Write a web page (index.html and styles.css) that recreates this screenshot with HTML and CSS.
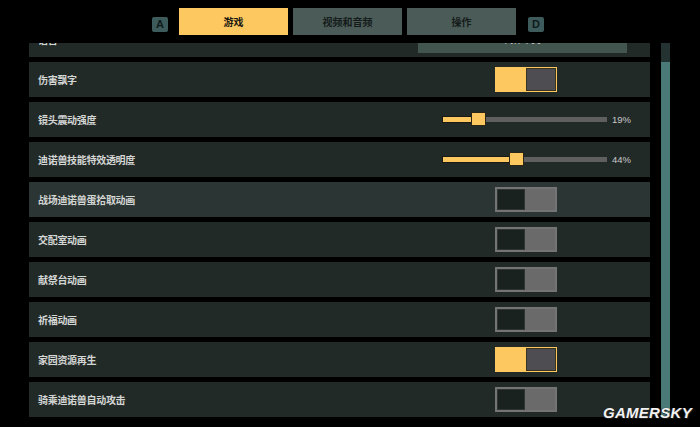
FILE: index.html
```html
<!DOCTYPE html>
<html lang="zh">
<head>
<meta charset="utf-8">
<title>设置 - 游戏</title>
<link rel="stylesheet" href="styles.css">
</head>
<body>
<header class="tabbar">
  <span class="key">A</span>
  <div class="tab active">游戏</div>
  <div class="tab">视频和音频</div>
  <div class="tab">操作</div>
  <span class="key">D</span>
</header>
<main class="main">
  <div class="viewport">
    <div class="list">
      <div class="row">
        <span class="label">语言</span>
        <div class="ctrl"><div class="select">简体中文</div></div>
      </div>
      <div class="row">
        <span class="label">伤害飘字</span>
        <div class="ctrl"><div class="toggle on"><span class="knob"></span></div></div>
      </div>
      <div class="row">
        <span class="label">镜头震动强度</span>
        <div class="ctrl">
          <div class="slider" style="--v:0.19"><span class="fill"></span><span class="thumb"></span></div>
          <span class="value">19%</span>
        </div>
      </div>
      <div class="row">
        <span class="label">迪诺兽技能特效透明度</span>
        <div class="ctrl">
          <div class="slider" style="--v:0.44"><span class="fill"></span><span class="thumb"></span></div>
          <span class="value">44%</span>
        </div>
      </div>
      <div class="row hover">
        <span class="label">战场迪诺兽蛋拾取动画</span>
        <div class="ctrl"><div class="toggle"><span class="knob"></span></div></div>
      </div>
      <div class="row">
        <span class="label">交配室动画</span>
        <div class="ctrl"><div class="toggle"><span class="knob"></span></div></div>
      </div>
      <div class="row">
        <span class="label">献祭台动画</span>
        <div class="ctrl"><div class="toggle"><span class="knob"></span></div></div>
      </div>
      <div class="row">
        <span class="label">祈福动画</span>
        <div class="ctrl"><div class="toggle"><span class="knob"></span></div></div>
      </div>
      <div class="row">
        <span class="label">家园资源再生</span>
        <div class="ctrl"><div class="toggle on"><span class="knob"></span></div></div>
      </div>
      <div class="row">
        <span class="label">骑乘迪诺兽自动攻击</span>
        <div class="ctrl"><div class="toggle"><span class="knob"></span></div></div>
      </div>
    </div>
  </div>
  <div class="scrollbar"><span class="thumbbar"></span></div>
</main>
<div class="watermark">GAMERSKY</div>
</body>
</html>
```
FILE: styles.css
```css
html, body {
  margin: 0;
  padding: 0;
  background: #000;
  width: 700px;
  height: 427px;
  overflow: hidden;
  font-family: "Noto Sans CJK SC", "Liberation Sans", sans-serif;
}

.tabbar {
  height: 43px;
  box-sizing: border-box;
  padding: 8px 4px 0 0;
  display: flex;
  align-items: flex-start;
  justify-content: center;
}

.key {
  width: 16px;
  height: 15px;
  margin-top: 9px;
  background: #3d5b5b;
  border-radius: 2px;
  color: #101a1a;
  font-family: "Liberation Sans", sans-serif;
  font-weight: bold;
  font-size: 11px;
  line-height: 15px;
  text-align: center;
}
.key:first-child { margin-right: 11px; }
.key:last-child { margin-left: 12px; }

.tab {
  width: 109px;
  height: 27px;
  margin-right: 5px;
  background: #4b5c58;
  color: #151b1a;
  font-size: 10px;
  font-weight: bold;
  line-height: 27px;
  text-align: center;
}
.tab:nth-child(4) { margin-right: 0; }
.tab.active {
  background: #fcc85f;
  color: #1c1a12;
}

.main {
  height: 384px;
  display: flex;
  padding-left: 29px;
  gap: 11px;
}

.viewport {
  width: 621px;
  height: 384px;
  overflow: hidden;
}

.list {
  margin-top: -21px;
  display: flex;
  flex-direction: column;
  gap: 5px;
}

.row {
  height: 35px;
  flex: none;
  display: flex;
  align-items: center;
  background: #222a28;
}
.row.hover { background: #2b3533; }

.label {
  flex: 1;
  padding-left: 9px;
  color: #d4d6d4;
  font-size: 10px;
  font-weight: bold;
  letter-spacing: -0.3px;
}

.ctrl {
  width: 232px;
  height: 100%;
  display: flex;
  align-items: center;
}

.select {
  width: 209px;
  height: 26px;
  margin-top: 1px;
  background: #42564f;
  color: #e6e6e6;
  font-size: 9px;
  line-height: 26px;
  text-align: center;
}

.toggle {
  margin-left: 77px;
  width: 62px;
  height: 25px;
  box-sizing: border-box;
  border: 2px solid #747474;
  background: #6a6a6a;
  display: flex;
  justify-content: flex-start;
}
.toggle .knob {
  width: 28px;
  height: 100%;
  background: #1a2220;
  box-shadow: inset 0 0 0 1px #2e3533;
}
.toggle.on {
  border-color: #fcc85f;
  background: #fcc85f;
  justify-content: flex-end;
}
.toggle.on .knob {
  width: 28px;
  background: #4e4d52;
  box-shadow: 0 0 0 1px #3a3320;
}

.slider {
  margin-left: 25px;
  width: 164px;
  height: 5px;
  background: #5f5f5f;
  position: relative;
}
.slider .fill {
  display: block;
  height: 100%;
  width: calc(var(--v) * (100% - 15px) + 7px);
  background: #fcc85f;
  box-shadow: 0 0 0 1px #1a1a14;
}
.slider .thumb {
  position: absolute;
  top: -5px;
  left: calc(var(--v) * (100% - 15px));
  width: 15px;
  height: 14px;
  box-sizing: border-box;
  background: #fcc85f;
  border: 1px solid #2a2517;
}

.value {
  margin-left: 5px;
  color: #c9c9c9;
  font-family: "Liberation Sans", sans-serif;
  font-size: 9.5px;
}

.scrollbar {
  width: 9px;
  height: 374px;
  background: #243332;
  display: flex;
  flex-direction: column;
  padding-top: 19px;
  box-sizing: border-box;
}
.thumbbar {
  flex: 1;
  background: #4a7a77;
}

.watermark {
  position: absolute;
  right: 8px;
  bottom: 6px;
  color: #f2f2f2;
  font-family: "Liberation Sans", sans-serif;
  font-weight: bold;
  font-style: italic;
  font-size: 15px;
  letter-spacing: 0.3px;
  text-shadow: 1px 1px 1px #222, -1px 0 1px #222;
}
```
